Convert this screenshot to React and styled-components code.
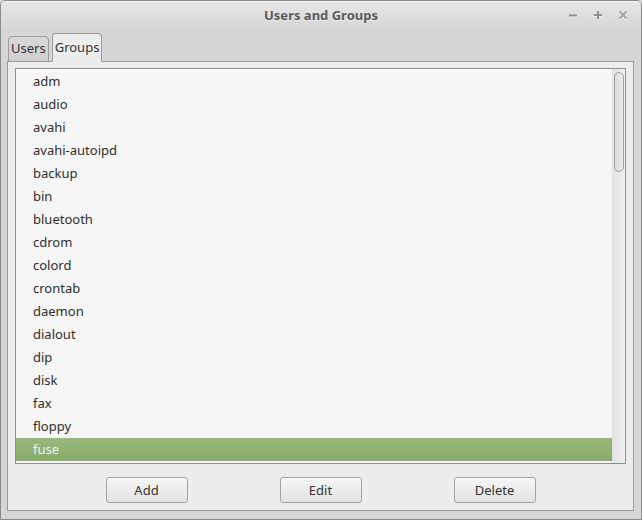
import React from 'react';
import styled, { createGlobalStyle } from 'styled-components';

const GlobalStyle = createGlobalStyle`
  html, body {
    margin: 0;
    padding: 0;
    background: #d6d6d6;
  }
  body {
    font-family: "Noto Sans", "DejaVu Sans", sans-serif;
  }
`;

const groups = [
  'adm', 'audio', 'avahi', 'avahi-autoipd', 'backup', 'bin', 'bluetooth',
  'cdrom', 'colord', 'crontab', 'daemon', 'dialout', 'dip', 'disk', 'fax',
  'floppy', 'fuse'
];

const App = () => {
  return (
    <>
      <GlobalStyle />
      <Window>
        <TitleBar>
          <span />
          <Title>Users and Groups</Title>
          <Controls>
            <CtrlButton>
              <svg width="10" height="10" viewBox="0 0 10 10">
                <path d="M1 5.5h8" stroke="#8e8e8e" strokeWidth="2" />
              </svg>
            </CtrlButton>
            <CtrlButton>
              <svg width="10" height="10" viewBox="0 0 10 10">
                <path d="M1 5h8M5 1v8" stroke="#8e8e8e" strokeWidth="2" />
              </svg>
            </CtrlButton>
            <CtrlButton>
              <svg width="10" height="10" viewBox="0 0 10 10">
                <path d="M1.5 1.5l7 7M8.5 1.5l-7 7" stroke="#a4a4a4" strokeWidth="2" />
              </svg>
            </CtrlButton>
          </Controls>
        </TitleBar>

        <Body>
          <TabStrip>
            <Tab>Users</Tab>
            <Tab active>Groups</Tab>
          </TabStrip>
          <Panel>
            <ListBox>
              <List>
                {groups.map(g => (
                  <Row key={g} selected={g === 'fuse'}>{g}</Row>
                ))}
              </List>
              <Track>
                <Thumb />
              </Track>
            </ListBox>
            <ButtonRow>
              <Button>Add</Button>
              <Button>Edit</Button>
              <Button>Delete</Button>
            </ButtonRow>
          </Panel>
        </Body>
      </Window>
    </>
  );
};

const Window = styled.div`
  width: 642px;
  height: 520px;
  box-sizing: border-box;
  border: 1px solid #8a8a8a;
  border-radius: 5px 5px 0 0;
  background: #d6d6d6;
  display: flex;
  flex-direction: column;
  overflow: hidden;
`;

const TitleBar = styled.div`
  height: 30px;
  flex: none;
  display: grid;
  grid-template-columns: 1fr auto 1fr;
  align-items: center;
  background: linear-gradient(to bottom, #e6e6e6 0%, #d6d6d6 100%);
  border-top: 1px solid #f2f2f2;
  box-sizing: border-box;
`;

const Title = styled.div`
  font-size: 13px;
  font-weight: 700;
  color: #5a5a5a;
  text-shadow: 0 1px 0 rgba(255, 255, 255, 0.5);
  margin-top: -4px;
`;

const Controls = styled.div`
  justify-self: end;
  display: flex;
  gap: 15px;
  margin-right: 13px;
  margin-top: -3px;
`;

const CtrlButton = styled.div`
  width: 10px;
  height: 10px;
  display: flex;
  filter: drop-shadow(0 1px 0 rgba(255, 255, 255, 0.7));
`;

const Body = styled.div`
  flex: 1;
  display: flex;
  flex-direction: column;
  padding: 2px 7px 8px 6px;
  min-height: 0;
`;

const TabStrip = styled.div`
  display: flex;
  align-items: flex-end;
  gap: 3px;
  padding-left: 1px;
  position: relative;
  z-index: 1;
  margin-bottom: -1px;
`;

const Tab = styled.div`
  box-sizing: border-box;
  height: ${p => (p.active ? '29px' : '26px')};
  padding: 0 2px 2px;
  display: flex;
  align-items: center;
  font-size: 13px;
  color: #333;
  border: 1px solid #9a9a9a;
  border-bottom: ${p => (p.active ? '1px solid #ededed' : '1px solid #9a9a9a')};
  border-radius: 4px 4px 0 0;
  background: ${p =>
    p.active
      ? '#ededed'
      : 'linear-gradient(to bottom, #d9d9d9, #cfcfcf)'};
`;

const Panel = styled.div`
  flex: 1;
  display: flex;
  flex-direction: column;
  border: 1px solid #9a9a9a;
  background: #ededed;
  padding: 6px 7px 6px 7px;
  min-height: 0;
`;

const ListBox = styled.div`
  height: 396px;
  flex: none;
  box-sizing: border-box;
  display: flex;
  border: 1px solid #8f8f8f;
  background: #f6f6f6;
  overflow: hidden;
`;

const List = styled.div`
  flex: 1;
  display: flex;
  flex-direction: column;
  padding-top: 1px;
`;

const Row = styled.div`
  height: 23px;
  flex: none;
  line-height: 23px;
  padding-left: 17px;
  font-size: 13px;
  color: ${p => (p.selected ? '#f2f2f2' : '#2e2e2e')};
  background: ${p =>
    p.selected
      ? 'linear-gradient(to bottom, #97b97b 0%, #88ab69 100%)'
      : 'transparent'};
`;

const Track = styled.div`
  width: 13px;
  flex: none;
  background: linear-gradient(to right, #e4e4e4, #f0f0f0);
  border-left: 1px solid #e0e0e0;
  padding: 3px 1px 0 1px;
  box-sizing: border-box;
`;

const Thumb = styled.div`
  height: 100px;
  width: 10px;
  box-sizing: border-box;
  border: 1px solid #9c9c9c;
  border-radius: 5px;
  background: linear-gradient(to right, #dcdcdc, #ececec);
`;

const ButtonRow = styled.div`
  display: grid;
  grid-template-columns: repeat(3, 174px);
  justify-content: center;
  justify-items: center;
  margin-top: 13px;
`;

const Button = styled.div`
  width: 82px;
  height: 26px;
  box-sizing: border-box;
  display: flex;
  align-items: center;
  justify-content: center;
  font-size: 13px;
  color: #333;
  border: 1px solid #a2a2a2;
  border-radius: 3px;
  background: linear-gradient(to bottom, #f6f6f6 0%, #e2e2e2 100%);
  box-shadow: inset 0 1px 0 #ffffff;
`;

export default App;
